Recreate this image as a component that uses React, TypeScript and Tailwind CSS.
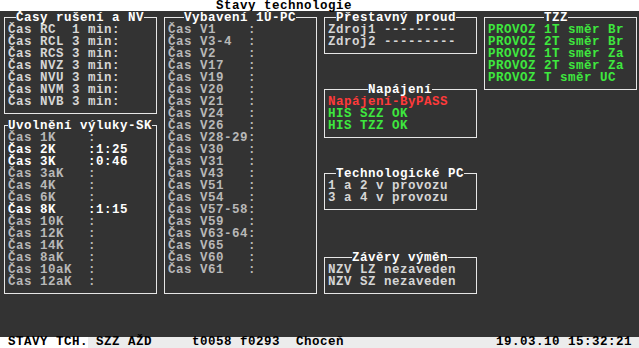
import type { ReactNode } from 'react'

type Line = { text: string; tone?: 'dim' | 'bright' | 'green' | 'red' | 'soft' }

const toneClass: Record<string, string> = {
  dim: 'text-[#b8b8b8]',
  soft: 'text-[#d6d6d6]',
  bright: 'text-white',
  green: 'text-[#3ee83e]',
  red: 'text-[#ff3a3a]',
}

// One framed panel. The frame sits in the middle of the border cells,
// like box-drawing characters would in text mode.
function Panel({
  place,
  title,
  titleIndent,
  lines,
  tone = 'soft',
}: {
  place: string
  title: string
  titleIndent: string
  lines: Line[]
  tone?: string
}) {
  return (
    <div
      className={`${place} relative before:absolute before:top-[5px] before:left-[4px] before:right-[3px] before:bottom-[6px] before:border before:border-[#e6e6e6] before:content-['']`}
    >
      <div className="h-[12px]">
        <span className={`relative ${titleIndent} bg-[#333333] text-white`}>{title}</span>
      </div>
      {lines.map((l, i) => (
        <div key={i} className={`relative h-[12px] pl-[8px] whitespace-pre ${toneClass[l.tone ?? tone]}`}>
          {l.text}
        </div>
      ))}
    </div>
  )
}

function Cell({ className, children }: { className: string; children: ReactNode }) {
  return <div className={`whitespace-pre ${className}`}>{children}</div>
}

const nv: Line[] = [
  'Čas RC  1 min:',
  'Čas RCL 3 min:',
  'Čas RCS 3 min:',
  'Čas NVZ 3 min:',
  'Čas NVU 3 min:',
  'Čas NVM 3 min:',
  'Čas NVB 3 min:',
].map((text) => ({ text }))

const vybaveni: Line[] = [
  'V1', 'V3-4', 'V2', 'V17', 'V19', 'V20', 'V21', 'V24', 'V26', 'V28-29', 'V30',
  'V31', 'V43', 'V51', 'V54', 'V57-58', 'V59', 'V63-64', 'V65', 'V60', 'V61',
].map((v) => ({ text: `Čas ${v.padEnd(6, ' ')}:` }))

const vyluky: Line[] = [
  ['1K', ''], ['2K', '1:25'], ['3K', '0:46'], ['3aK', ''], ['4K', ''], ['6K', ''],
  ['8K', '1:15'], ['10K', ''], ['12K', ''], ['14K', ''], ['8aK', ''], ['10aK', ''], ['12aK', ''],
].map(([k, t]) => ({ text: `Čas ${k.padEnd(6, ' ')}:${t}`, tone: t ? 'bright' : 'dim' }))

export default function App() {
  return (
    <div
      className="grid h-[348px] w-[639px] overflow-hidden grid-cols-[repeat(80,8px)] grid-rows-[repeat(29,12px)] bg-[#333333] text-[12.5px] tracking-[0.5px] leading-[12px] font-bold"
      style={{ fontFamily: '"Liberation Mono", "DejaVu Sans Mono", monospace' }}
    >
      {/* title bar */}
      <Cell className="col-start-1 col-span-full row-start-1 h-[11px] bg-white pt-[1px] pl-[216px] leading-[10px] text-black">
        Stavy technologie
      </Cell>

      <Panel
        place="col-start-1 col-span-20 row-start-2 row-span-9"
        title="Časy rušení a NV"
        titleIndent="ml-[16px]"
        lines={nv}
      />
      <Panel
        place="col-start-21 col-span-20 row-start-2 row-span-24"
        title="Vybavení 1Ú-PC"
        titleIndent="ml-[24px]"
        lines={vybaveni}
        tone="dim"
      />
      <Panel
        place="col-start-1 col-span-20 row-start-11 row-span-15"
        title="Uvolnění výluky-SK"
        titleIndent="ml-[8px]"
        lines={vyluky}
      />
      <Panel
        place="col-start-41 col-span-20 row-start-2 row-span-4"
        title="Přestavný proud"
        titleIndent="ml-[16px]"
        lines={[{ text: 'Zdroj1 ---------' }, { text: 'Zdroj2 ---------' }]}
      />
      <Panel
        place="col-start-61 col-span-20 row-start-2 row-span-7"
        title="TZZ"
        titleIndent="ml-[64px]"
        tone="green"
        lines={[
          { text: 'PROVOZ 1T směr Br' },
          { text: 'PROVOZ 2T směr Br' },
          { text: 'PROVOZ 1T směr Za' },
          { text: 'PROVOZ 2T směr Za' },
          { text: 'PROVOZ T směr UC' },
        ]}
      />
      <Panel
        place="col-start-41 col-span-20 row-start-8 row-span-5"
        title="Napájení"
        titleIndent="ml-[48px]"
        lines={[
          { text: 'Napájení-ByPASS', tone: 'red' },
          { text: 'HIS SZZ OK', tone: 'green' },
          { text: 'HIS TZZ OK', tone: 'green' },
        ]}
      />
      <Panel
        place="col-start-41 col-span-20 row-start-15 row-span-4"
        title="Technologické PC"
        titleIndent="ml-[16px]"
        lines={[{ text: '1 a 2 v provozu' }, { text: '3 a 4 v provozu' }]}
      />
      <Panel
        place="col-start-41 col-span-20 row-start-22 row-span-4"
        title="Závěry výměn"
        titleIndent="ml-[32px]"
        lines={[{ text: 'NZV LZ nezaveden' }, { text: 'NZV SZ nezaveden' }]}
      />

      {/* status bar */}
      <div className="col-start-1 col-span-full row-start-29 flex pt-[1px] leading-[11px] text-black">
        <Cell className="w-[88px] bg-white pl-[8px]">STAVY TCH.</Cell>
        <Cell className="flex-1 bg-[#ececec] pl-[8px]">
          {'SZZ AŽD     t0058 f0293  Choceň                   19.03.10 15:32:21'}
        </Cell>
      </div>
    </div>
  )
}
